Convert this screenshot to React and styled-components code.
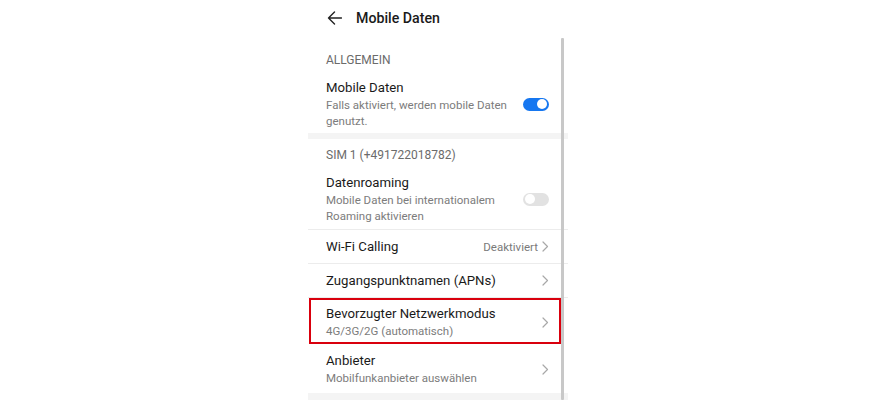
import React from 'react';
import styled, { createGlobalStyle } from 'styled-components';

const GlobalStyle = createGlobalStyle`
    html, body {
        margin: 0;
        padding: 0;
        background: #ffffff;
        overflow: hidden;
    }
    body {
        font-family: Roboto, "Noto Sans", "Liberation Sans", sans-serif;
        -webkit-font-smoothing: antialiased;
    }
`;

const Page = styled.div`
    width: 100%;
    height: 400px;
    display: flex;
    justify-content: flex-start;
    padding-left: 308px;
    box-sizing: border-box;
`;

const Screen = styled.div`
    position: relative;
    width: 260px;
    display: flex;
    flex-direction: column;
`;

const Header = styled.div`
    height: 36px;
    padding: 0 0 8px 19px;
    display: flex;
    align-items: center;
    gap: 14px;
`;

const Title = styled.div`
    font-size: 14.2px;
    font-weight: 500;
    color: #1a1a1a;
`;

const Scrollbar = styled.div`
    position: absolute;
    top: 38px;
    right: 4px;
    bottom: 0;
    width: 3px;
    background: #c8c8c8;
    border-radius: 1px;
`;

const SectionLabel = styled.div`
    padding: 8px 18px 6px;
    line-height: 16px;
    font-size: 12px;
    color: #6b6b6b;
`;

const Band = styled.div`
    height: 6px;
    background: #f4f4f4;
`;

const Row = styled.div`
    display: flex;
    align-items: center;
    min-height: ${props => props.single ? '34px' : 'auto'};
    padding: ${props => props.single ? '0' : '5px'} 19px ${props => props.single ? '0' : '5px'} 18px;
    box-sizing: border-box;
    border-bottom: ${props => props.divider ? '1px solid #ececec' : 'none'};
`;

const HighlightRow = styled(Row)`
    border: 2px solid #d9000d;
    margin: 0 7px 2px 1px;
    padding: 5px 10px 3px 15px;
`;

const Texts = styled.div`
    flex: 1;
    display: flex;
    flex-direction: column;
`;

const RowTitle = styled.div`
    font-size: 13.2px;
    line-height: 18px;
    color: #1a1a1a;
`;

const RowSub = styled.div`
    font-size: 11.5px;
    line-height: 16px;
    color: #7c7c7c;
    padding-right: 8px;
`;

const Value = styled.span`
    font-size: 11.5px;
    color: #7a7a7a;
    margin-right: 4px;
`;

const Toggle = styled.div`
    position: relative;
    width: 26px;
    height: 13px;
    border-radius: 7px;
    background: ${props => props.on ? '#1677f0' : '#e2e2e2'};
    flex-shrink: 0;
    &::after {
        content: '';
        position: absolute;
        top: 1.5px;
        ${props => props.on ? 'right: 2px;' : 'left: 1.5px;'}
        width: 10px;
        height: 10px;
        border-radius: 50%;
        background: #ffffff;
    }
`;

const BackArrow = () => (
    <svg width="15" height="14" viewBox="0 0 15 14" fill="none">
        <path d="M14.5 7H1.5M7.5 1L1.5 7L7.5 13" stroke="#222" strokeWidth="1.4" strokeLinecap="round" strokeLinejoin="round" />
    </svg>
);

const Chevron = () => (
    <svg width="7" height="11" viewBox="0 0 7 11" fill="none">
        <path d="M1 1L5.5 5.5L1 10" stroke="#a8a8a8" strokeWidth="1.2" strokeLinecap="round" strokeLinejoin="round" />
    </svg>
);

const BottomFill = styled.div`
    flex: 1;
    margin-top: 2px;
    background: #f4f4f4;
`;

export default function App() {
    return (
        <>
            <GlobalStyle />
            <Page>
                <Screen>
                    <Header>
                        <BackArrow />
                        <Title>Mobile Daten</Title>
                    </Header>

                    <SectionLabel>ALLGEMEIN</SectionLabel>
                    <Row style={{ paddingBottom: 4 }}>
                        <Texts>
                            <RowTitle>Mobile Daten</RowTitle>
                            <RowSub>Falls aktiviert, werden mobile Daten genutzt.</RowSub>
                        </Texts>
                        <Toggle on />
                    </Row>

                    <Band />

                    <SectionLabel>SIM 1 (+491722018782)</SectionLabel>
                    <Row divider>
                        <Texts>
                            <RowTitle>Datenroaming</RowTitle>
                            <RowSub>Mobile Daten bei internationalem Roaming aktivieren</RowSub>
                        </Texts>
                        <Toggle />
                    </Row>
                    <Row single divider>
                        <Texts>
                            <RowTitle>Wi-Fi Calling</RowTitle>
                        </Texts>
                        <Value>Deaktiviert</Value>
                        <Chevron />
                    </Row>
                    <Row single divider>
                        <Texts>
                            <RowTitle>Zugangspunktnamen (APNs)</RowTitle>
                        </Texts>
                        <Chevron />
                    </Row>
                    <HighlightRow>
                        <Texts>
                            <RowTitle>Bevorzugter Netzwerkmodus</RowTitle>
                            <RowSub>4G/3G/2G (automatisch)</RowSub>
                        </Texts>
                        <Chevron />
                    </HighlightRow>
                    <Row style={{ paddingTop: 6 }}>
                        <Texts>
                            <RowTitle>Anbieter</RowTitle>
                            <RowSub>Mobilfunkanbieter auswählen</RowSub>
                        </Texts>
                        <Chevron />
                    </Row>
                    <BottomFill />

                    <Scrollbar />
                </Screen>
            </Page>
        </>
    );
}
